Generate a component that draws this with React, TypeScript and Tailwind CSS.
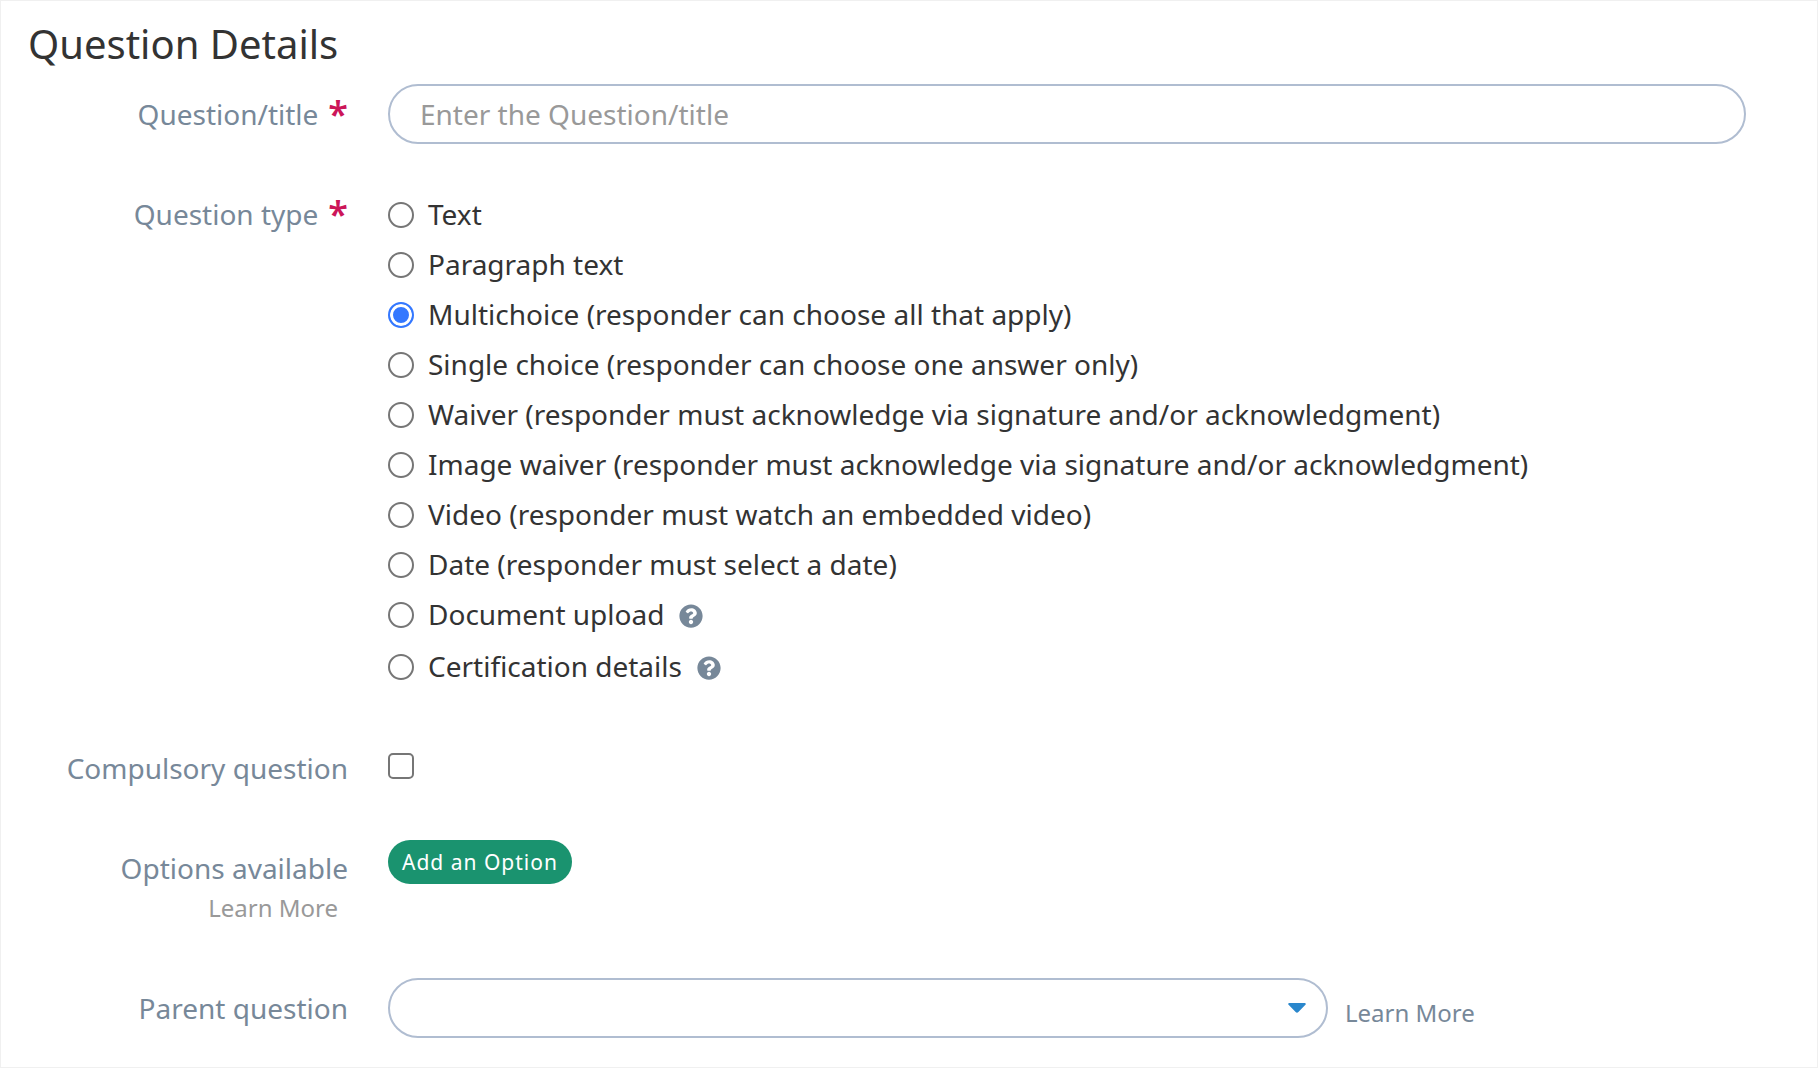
import { useState } from "react";
import type { ReactNode } from "react";
import { FaQuestionCircle } from "react-icons/fa";

interface QuestionType {
  value: string;
  label: string;
  help?: string;
}

const questionTypes: QuestionType[] = [
  { value: "text", label: "Text" },
  { value: "paragraph", label: "Paragraph text" },
  { value: "multichoice", label: "Multichoice (responder can choose all that apply)" },
  { value: "single", label: "Single choice (responder can choose one answer only)" },
  { value: "waiver", label: "Waiver (responder must acknowledge via signature and/or acknowledgment)" },
  { value: "image-waiver", label: "Image waiver (responder must acknowledge via signature and/or acknowledgment)" },
  { value: "video", label: "Video (responder must watch an embedded video)" },
  { value: "date", label: "Date (responder must select a date)" },
  { value: "document", label: "Document upload", help: "About document upload" },
  { value: "certification", label: "Certification details", help: "About certification details" },
];

export default function App() {
  const [title, setTitle] = useState("");
  const [type, setType] = useState("multichoice");
  const [compulsory, setCompulsory] = useState(false);

  return (
    <form
      className="border border-[#f0f0f0] bg-white pt-[15px] pr-[71px] pb-[29px] pl-[27px] font-['Noto_Sans',sans-serif] text-[28px] text-[#333333]"
      onSubmit={(e) => e.preventDefault()}
    >
      <h1 className="mb-[13px] text-[40px] leading-[55px]">Question Details</h1>

      <FormRow
        label={
          <label htmlFor="title" className="flex justify-end leading-[60px]">
            Question/title
            <Required />
          </label>
        }
      >
        <input
          id="title"
          type="text"
          required
          value={title}
          onChange={(e) => setTitle(e.target.value)}
          placeholder="Enter the Question/title"
          className="h-[60px] w-full rounded-full border-2 border-[#b0bdd1] px-[30px] outline-none placeholder:text-[#999999]"
        />
      </FormRow>

      <div role="radiogroup" aria-labelledby="type-label" className="mt-[46px]">
        <FormRow
          label={
            <span id="type-label" className="flex justify-end leading-[48px]">
              Question type
              <Required />
            </span>
          }
        >
          {questionTypes.map((item) => (
            <div key={item.value} className={`flex items-start ${item.help ? "mb-[2px]" : ""}`}>
              <label className="flex h-[50px] items-start gap-[14px] leading-[48px]">
                <input
                  type="radio"
                  name="question-type"
                  value={item.value}
                  checked={type === item.value}
                  onChange={() => setType(item.value)}
                  className="mt-3 size-[26px] shrink-0 appearance-none rounded-full border-2 border-[#767676] bg-white checked:border-[#3478ff] checked:bg-[#3478ff] checked:shadow-[inset_0_0_0_3px_#fff]"
                />
                {item.label}
              </label>
              {item.help && (
                <button type="button" aria-label={item.help} className="mt-[14px] ml-[15px] text-[#778899]">
                  <FaQuestionCircle className="size-6" />
                </button>
              )}
            </div>
          ))}
        </FormRow>
      </div>

      <div className="mt-[49px]">
        <FormRow
          label={
            <label htmlFor="compulsory" className="leading-[50px]">
              Compulsory question
            </label>
          }
        >
          <input
            id="compulsory"
            type="checkbox"
            checked={compulsory}
            onChange={(e) => setCompulsory(e.target.checked)}
            className="mt-[10px] block size-[26px] appearance-none rounded-[5px] border-2 border-[#767676] bg-white checked:border-[#3478ff] checked:bg-[#3478ff]"
          />
        </FormRow>
      </div>

      <div className="mt-[47px]">
        <FormRow
          label={
            <div className="flex flex-col items-end pt-[3px]">
              <span className="leading-[50px]">Options available</span>
              <a href="#options" className="pr-[10px] text-2xl leading-[30px] text-[#999999]">
                Learn More
              </a>
            </div>
          }
        >
          <button
            type="button"
            className="block h-11 rounded-full bg-[#1a936f] px-[14px] text-[21px] leading-[42px] tracking-[1px] text-white"
          >
            Add an Option
          </button>
        </FormRow>
      </div>

      <div className="mt-[55px]">
        <FormRow
          label={
            <label htmlFor="parent" className="leading-[60px]">
              Parent question
            </label>
          }
        >
          <div className="flex items-center">
            <div className="relative w-[940px] shrink">
              <select
                id="parent"
                className="block h-[60px] w-full appearance-none rounded-full border-2 border-[#b0bdd1] bg-white px-[30px] outline-none"
              >
                <option value=""></option>
              </select>
              <svg
                viewBox="0 0 18 10"
                className="pointer-events-none absolute top-[25px] right-[22px] h-[10px] w-[18px] fill-[#2a87cc]"
              >
                <path d="M1 0H17Q18.4 .6 17.4 1.8L10.4 9Q9 10.6 7.6 9L.6 1.8Q-.4 .6 1 0Z" />
              </svg>
            </div>
            <a href="#parent" className="mt-[10px] ml-[17px] text-2xl leading-8 whitespace-nowrap text-[#778899]">
              Learn More
            </a>
          </div>
        </FormRow>
      </div>
    </form>
  );
}

function FormRow({ label, children }: { label: ReactNode; children: ReactNode }) {
  return (
    <div className="grid grid-cols-[320px_minmax(0,1fr)] gap-10">
      <div className="text-right text-[#778899]">{label}</div>
      <div>{children}</div>
    </div>
  );
}

function Required() {
  return <span className="ml-[10px] text-4xl leading-[inherit] font-semibold text-[#cc1559]">*</span>;
}
